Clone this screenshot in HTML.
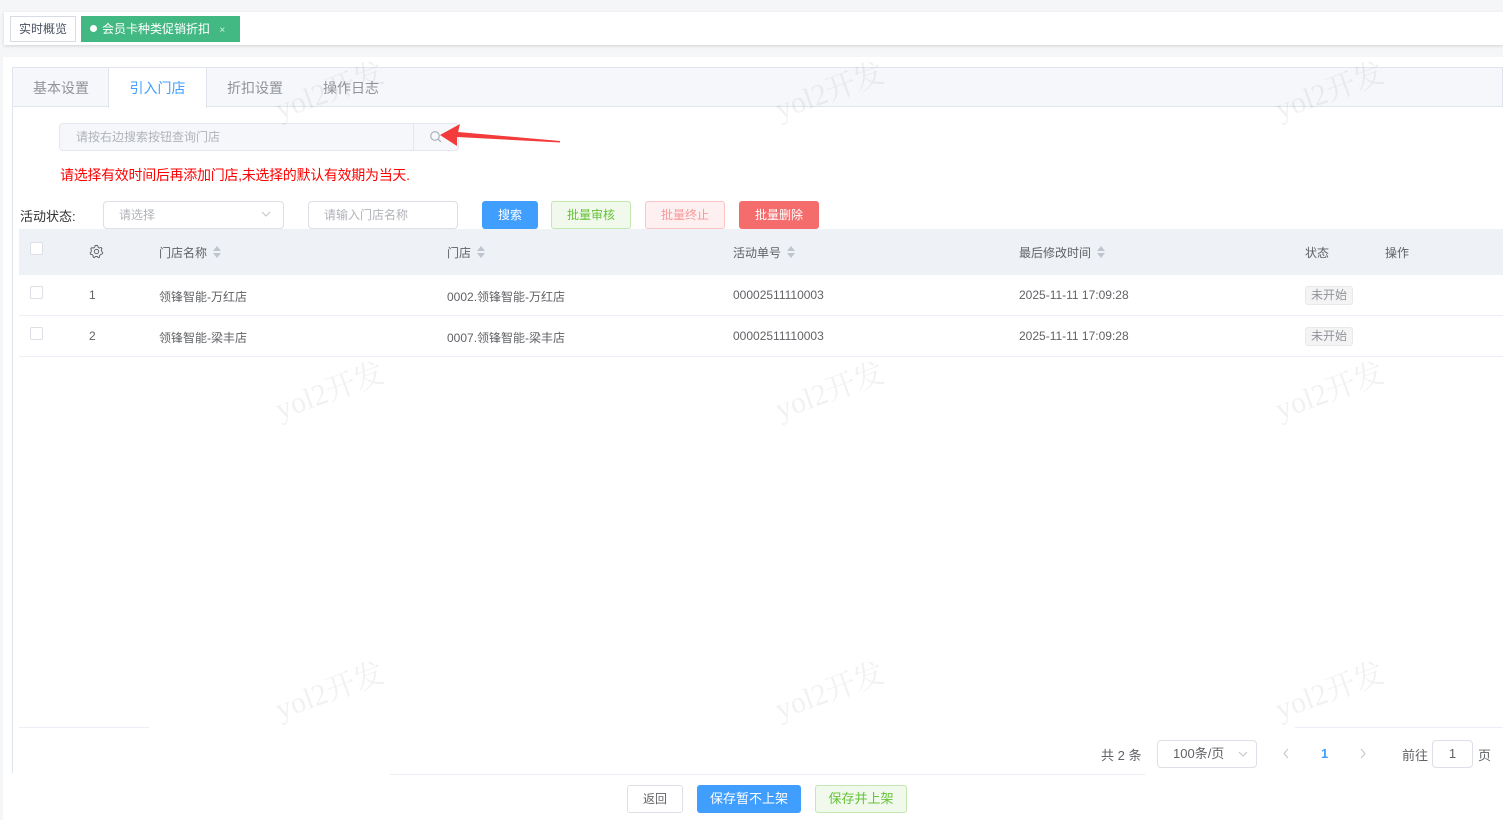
<!DOCTYPE html>
<html><head><meta charset="utf-8"><style>
*{box-sizing:border-box;margin:0;padding:0}
body{width:1503px;height:820px;background:#f5f6f8;font-family:"Liberation Sans","Noto Sans CJK SC",sans-serif;font-size:12px;color:#606266;position:relative;overflow:hidden}
.abs{position:absolute}
.topbar{left:4px;top:12px;width:1499px;height:33px;background:#fff;box-shadow:0 1px 3px rgba(0,0,0,.15)}
.tag1{left:10px;top:16px;width:66px;height:26px;border:1px solid #d8dce5;background:#fff;color:#495060;line-height:24px;text-align:center;font-size:12px}
.tag2{left:81px;top:16px;width:159px;height:26px;background:#42b983;color:#fff;line-height:26px;font-size:12px;padding-left:9px}
.tag2 i{display:inline-block;width:7px;height:7px;border-radius:50%;background:#fff;margin-right:5px;vertical-align:1px}
.card{left:3px;top:57px;width:1500px;height:763px;background:#fff}
.tabs{left:12px;top:67px;width:1491px;height:40px;background:#f5f7fa;border:1px solid #dfe4ed}
.tab{position:absolute;top:0;height:39px;line-height:41px;font-size:14px;color:#909399;text-align:center}
.vline{left:12px;top:106px;width:1px;height:667px;background:#dfe4ed}
.inp{border:1px solid #dcdfe6;border-radius:4px;background:#fff;color:#b0b3b9;font-size:12px}
.btn{position:absolute;top:201px;height:28px;border-radius:3px;line-height:26px;text-align:center;font-size:12px}
.th{top:229px;left:19px;width:1484px;height:46px;background:#eef1f6}
.row{left:19px;width:1484px;height:41px;border-bottom:1px solid #ebeef5;background:#fff}
.c{position:absolute;font-size:12px;color:#606266;white-space:nowrap}
.cb{position:absolute;left:11px;width:13px;height:13px;border:1px solid #dcdfe6;border-radius:2px;background:#fff}
.sort{display:inline-block;margin-left:6px;vertical-align:-1px;width:9px;height:12px;position:relative}
.sort:before{content:"";position:absolute;left:0;top:0;border:4.5px solid transparent;border-bottom:5px solid #c0c4cc;border-top:0}
.sort:after{content:"";position:absolute;left:0;bottom:0;border:4.5px solid transparent;border-top:5px solid #c0c4cc;border-bottom:0}
.tagst{position:absolute;left:1286px;width:48px;height:19px;border:1px solid #e9e9eb;background:#f4f4f5;border-radius:3px;color:#909399;text-align:center;line-height:17px;font-size:12px}
.wm{position:absolute;color:rgba(0,0,0,.055);font-family:"Liberation Serif","Noto Serif CJK SC",serif;font-size:30px;transform:rotate(-20deg);white-space:nowrap}
</style></head><body>
<div class="abs topbar"></div>
<div class="abs tag1">实时概览</div>
<div class="abs tag2"><i></i>会员卡种类促销折扣 <span style="margin-left:6px;font-size:10px;opacity:.8">×</span></div>
<div class="abs card"></div>
<div class="abs tabs">
 <div class="tab" style="left:0;width:96px">基本设置</div>
 <div class="tab" style="left:95px;width:99px;background:#fff;color:#409eff;border-left:1px solid #dfe4ed;border-right:1px solid #dfe4ed;height:40px">引入门店</div>
 <div class="tab" style="left:194px;width:96px">折扣设置</div>
 <div class="tab" style="left:290px;width:96px">操作日志</div>
</div>
<div class="abs vline"></div>
<div class="abs inp" style="left:59px;top:123px;width:400px;height:28px;background:#f5f7fa;border-color:#e4e7ed;line-height:26px;padding-left:16px">请按右边搜索按钮查询门店</div>
<div class="abs" style="left:413px;top:124px;width:1px;height:26px;background:#e4e7ed"></div>
<svg class="abs" style="left:429px;top:130px" width="14" height="14" viewBox="0 0 14 14"><circle cx="6" cy="6" r="4.3" fill="none" stroke="#a8abb2" stroke-width="1.1"/><line x1="9.2" y1="9.2" x2="12" y2="12" stroke="#a8abb2" stroke-width="1.1"/></svg>
<svg class="abs" style="left:436px;top:122px" width="130" height="26" viewBox="0 0 130 26"><path d="M4 13 L24 2 L22 10 L124 19 L124 20.5 L21 15 L21 24 Z" fill="#f33b3b"/></svg>
<div class="abs" style="left:60px;top:165px;color:#f00;font-size:14px;letter-spacing:-0.3px">请选择有效时间后再添加门店,未选择的默认有效期为当天.</div>
<div class="abs" style="left:20px;top:206px;color:#303133;font-size:13px">活动状态:</div>
<div class="abs inp" style="left:103px;top:201px;width:181px;height:28px;line-height:26px;padding-left:15px">请选择<svg style="position:absolute;right:12px;top:9px" width="10" height="7"><path d="M1 1 L5 5 L9 1" fill="none" stroke="#c0c4cc"/></svg></div>
<div class="abs inp" style="left:308px;top:201px;width:150px;height:28px;line-height:26px;padding-left:15px">请输入门店名称</div>
<div class="btn" style="left:482px;width:56px;background:#409eff;color:#fff;line-height:28px">搜索</div>
<div class="btn" style="left:551px;width:80px;background:#f0f9eb;border:1px solid #c2e7b0;color:#67c23a">批量审核</div>
<div class="btn" style="left:645px;width:80px;background:#fef0f0;border:1px solid #fbc4c4;color:#f89898">批量终止</div>
<div class="btn" style="left:739px;width:80px;background:#f56c6c;color:#fff;line-height:28px">批量删除</div>
<div class="abs th">
 <div class="cb" style="top:13px"></div>
 <svg class="c" style="left:70px;top:15px" width="15" height="15" viewBox="0 0 16 16"><path d="M8 1.5 L9.3 1.8 L9.7 3.5 L11.2 4.3 L12.8 3.7 L13.8 4.9 L13.2 6.5 L13.6 8 L14.7 9.3 L14 10.7 L12.4 11.1 L11.3 12.3 L11.2 14 L9.8 14.5 L8.6 13.3 L7 13.3 L5.8 14.5 L4.4 14 L4.4 12.3 L3.3 11.2 L1.6 11 L1.2 9.5 L2.4 8.3 L2.5 6.6 L1.8 5.1 L2.9 3.9 L4.5 4.4 L6 3.5 L6.5 1.8 Z" fill="none" stroke="#606266" stroke-width="1"/><circle cx="8" cy="8" r="2.3" fill="none" stroke="#606266"/></svg>
 <div class="c" style="left:140px;top:15px">门店名称<span class="sort"></span></div>
 <div class="c" style="left:428px;top:15px">门店<span class="sort"></span></div>
 <div class="c" style="left:714px;top:15px">活动单号<span class="sort"></span></div>
 <div class="c" style="left:1000px;top:15px">最后修改时间<span class="sort"></span></div>
 <div class="c" style="left:1286px;top:15px">状态</div>
 <div class="c" style="left:1366px;top:15px">操作</div>
</div>
<div class="abs row" style="top:275px">
 <div class="cb" style="top:11px"></div>
 <div class="c" style="left:70px;top:13px">1</div>
 <div class="c" style="left:140px;top:13px">领锋智能-万红店</div>
 <div class="c" style="left:428px;top:13px">0002.领锋智能-万红店</div>
 <div class="c" style="left:714px;top:13px">00002511110003</div>
 <div class="c" style="left:1000px;top:13px">2025-11-11 17:09:28</div>
 <div class="tagst" style="top:11px">未开始</div>
</div>
<div class="abs row" style="top:316px">
 <div class="cb" style="top:11px"></div>
 <div class="c" style="left:70px;top:13px">2</div>
 <div class="c" style="left:140px;top:13px">领锋智能-梁丰店</div>
 <div class="c" style="left:428px;top:13px">0007.领锋智能-梁丰店</div>
 <div class="c" style="left:714px;top:13px">00002511110003</div>
 <div class="c" style="left:1000px;top:13px">2025-11-11 17:09:28</div>
 <div class="tagst" style="top:11px">未开始</div>
</div>
<div class="abs" style="left:19px;top:727px;width:130px;height:1px;background:#ebeef5"></div>
<div class="abs" style="left:1295px;top:727px;width:208px;height:1px;background:#ebeef5"></div>
<div class="abs" style="left:390px;top:774px;width:755px;height:1px;background:#ebeef5"></div>
<div class="abs" style="left:1101px;top:745px;font-size:13px;color:#606266">共 2 条</div>
<div class="abs inp" style="left:1157px;top:740px;width:100px;height:28px;line-height:26px;padding-left:15px;color:#606266;font-size:13px">100条/页<svg style="position:absolute;right:8px;top:10px" width="10" height="7"><path d="M1 1 L5 5 L9 1" fill="none" stroke="#c0c4cc"/></svg></div>
<svg class="abs" style="left:1282px;top:748px" width="8" height="11"><path d="M6 1 L2 5.5 L6 10" fill="none" stroke="#c0c4cc"/></svg>
<div class="abs" style="left:1321px;top:746px;color:#409eff;font-weight:bold;font-size:13px">1</div>
<svg class="abs" style="left:1359px;top:748px" width="8" height="11"><path d="M2 1 L6 5.5 L2 10" fill="none" stroke="#c0c4cc"/></svg>
<div class="abs" style="left:1402px;top:745px;font-size:13px">前往</div>
<div class="abs inp" style="left:1432px;top:740px;width:41px;height:28px;line-height:26px;text-align:center;color:#606266;font-size:13px">1</div>
<div class="abs" style="left:1478px;top:745px;font-size:13px">页</div>
<div class="btn" style="top:785px;left:627px;width:56px;border:1px solid #dcdfe6;background:#fff;color:#606266">返回</div>
<div class="btn" style="top:785px;left:697px;width:104px;background:#409eff;color:#fff;line-height:28px;font-size:13px">保存暂不上架</div>
<div class="btn" style="top:785px;left:815px;width:92px;background:#f0f9eb;border:1px solid #c2e7b0;color:#67c23a;font-size:13px">保存并上架</div>
<div class="wm" style="left:272px;top:66px">yol2开发</div>
<div class="wm" style="left:772px;top:66px">yol2开发</div>
<div class="wm" style="left:1272px;top:66px">yol2开发</div>
<div class="wm" style="left:272px;top:366px">yol2开发</div>
<div class="wm" style="left:772px;top:366px">yol2开发</div>
<div class="wm" style="left:1272px;top:366px">yol2开发</div>
<div class="wm" style="left:272px;top:666px">yol2开发</div>
<div class="wm" style="left:772px;top:666px">yol2开发</div>
<div class="wm" style="left:1272px;top:666px">yol2开发</div>
</body></html>
